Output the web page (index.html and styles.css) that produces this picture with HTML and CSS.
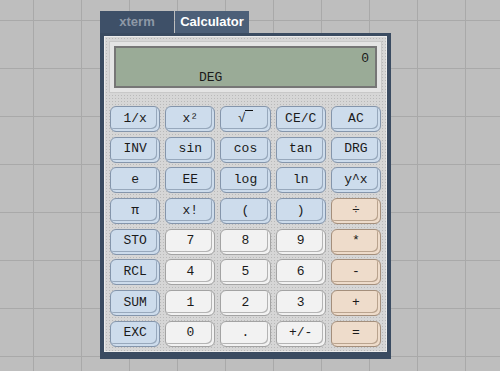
FILE: index.html
```html
<!DOCTYPE html>
<html lang="en">
<head>
  <meta charset="UTF-8" />
  <title>Calculator</title>
  <link rel="stylesheet" href="styles.css">
</head>
<body>
  <div class="desktop">
    <div class="tabs">
      <div class="tab">xterm</div>
      <div class="tab active">Calculator</div>
    </div>

    <div class="window">
      <div class="panel">
        <div class="display">
          <div class="readout">0</div>
          <div class="mode">DEG</div>
        </div>

        <div class="keys">
          <button class="key fn">1/x</button>
          <button class="key fn">x&sup2;</button>
          <button class="key fn sqrt">&radic;<span class="bar"></span></button>
          <button class="key fn">CE/C</button>
          <button class="key fn">AC</button>

          <button class="key fn">INV</button>
          <button class="key fn">sin</button>
          <button class="key fn">cos</button>
          <button class="key fn">tan</button>
          <button class="key fn">DRG</button>

          <button class="key fn">e</button>
          <button class="key fn">EE</button>
          <button class="key fn">log</button>
          <button class="key fn">ln</button>
          <button class="key fn">y^x</button>

          <button class="key fn">&pi;</button>
          <button class="key fn">x!</button>
          <button class="key fn">(</button>
          <button class="key fn">)</button>
          <button class="key op">&divide;</button>

          <button class="key fn">STO</button>
          <button class="key num">7</button>
          <button class="key num">8</button>
          <button class="key num">9</button>
          <button class="key op">*</button>

          <button class="key fn">RCL</button>
          <button class="key num">4</button>
          <button class="key num">5</button>
          <button class="key num">6</button>
          <button class="key op">-</button>

          <button class="key fn">SUM</button>
          <button class="key num">1</button>
          <button class="key num">2</button>
          <button class="key num">3</button>
          <button class="key op">+</button>

          <button class="key fn">EXC</button>
          <button class="key num">0</button>
          <button class="key num">.</button>
          <button class="key num">+/-</button>
          <button class="key op">=</button>
        </div>
      </div>
    </div>
  </div>
</body>
</html>
```

FILE: styles.css
```css
body {
  margin: 0;
  height: 371px;
  overflow: hidden;
  background-color: #bebebe;
  background-image:
    linear-gradient(to right, #a9a9a9 1px, transparent 1px),
    linear-gradient(to bottom, #a9a9a9 1px, transparent 1px);
  background-size: 48px 48px;
  background-position: 33px 20px;
  font-family: "Liberation Mono", monospace;
}

.desktop { padding: 11px 0 0 100px; }

.tabs { display: flex; gap: 1px; }
.tab {
  width: 74px;
  height: 22px;
  text-align: center;
  background: #3e5068;
  color: #8d98a6;
  font: bold 13px "Liberation Sans", Arial, sans-serif;
  line-height: 22px;
}
.tab.active { background: #4c5f78; color: #fff; }

.window {
  width: 283px;
  background: #3a4b61;
  padding: 3px 4px 7px 4px;
}

.panel {
  border: 1px solid #ececec;
  background-color: #d6d6d6;
  background-image: radial-gradient(circle, #b9b9b9 0.8px, transparent 0.9px);
  background-size: 3px 3px;
  padding: 5px 5px 4px 5px;
}

.display {
  position: relative;
  height: 42px;
  margin: 0 0 14px 0;
  border: 4px solid #e4e4e4;
  outline: 1px solid #c8c8c8;
  background: #9aab97;
  box-shadow: inset 0 0 0 2px #767676;
  color: #1a1a1a;
  font-size: 13px;
}
.readout { position: absolute; right: 8px; top: 5px; }
.mode { position: absolute; left: 85px; top: 24px; }

.keys {
  display: grid;
  grid-template-columns: repeat(5, 1fr);
  column-gap: 5px;
  row-gap: 4.7px;
}

.key {
  height: 26px;
  padding: 0 0 2px 0;
  border-radius: 6px;
  font-family: "Liberation Mono", monospace;
  font-size: 13px;
  color: #1a1a1a;
  cursor: pointer;
}
.key.fn {
  background: #cddcec;
  border: 1px solid #8495ab;
  box-shadow: inset -2px -2px 0 #cddcec, inset -3px -3px 0 #97a8bc;
}
.key.num {
  background: #f2f2f2;
  border: 1px solid #a3a3a3;
  box-shadow: inset -2px -2px 0 #f2f2f2, inset -3px -3px 0 #b4b4b4;
}
.key.op {
  background: #eedccb;
  border: 1px solid #a48f7c;
  box-shadow: inset -2px -2px 0 #eedccb, inset -3px -3px 0 #b9a38e;
}

.sqrt .bar {
  display: inline-block;
  width: 8px;
  height: 1px;
  background: #111;
  vertical-align: 11px;
  margin-left: -1px;
}
```
